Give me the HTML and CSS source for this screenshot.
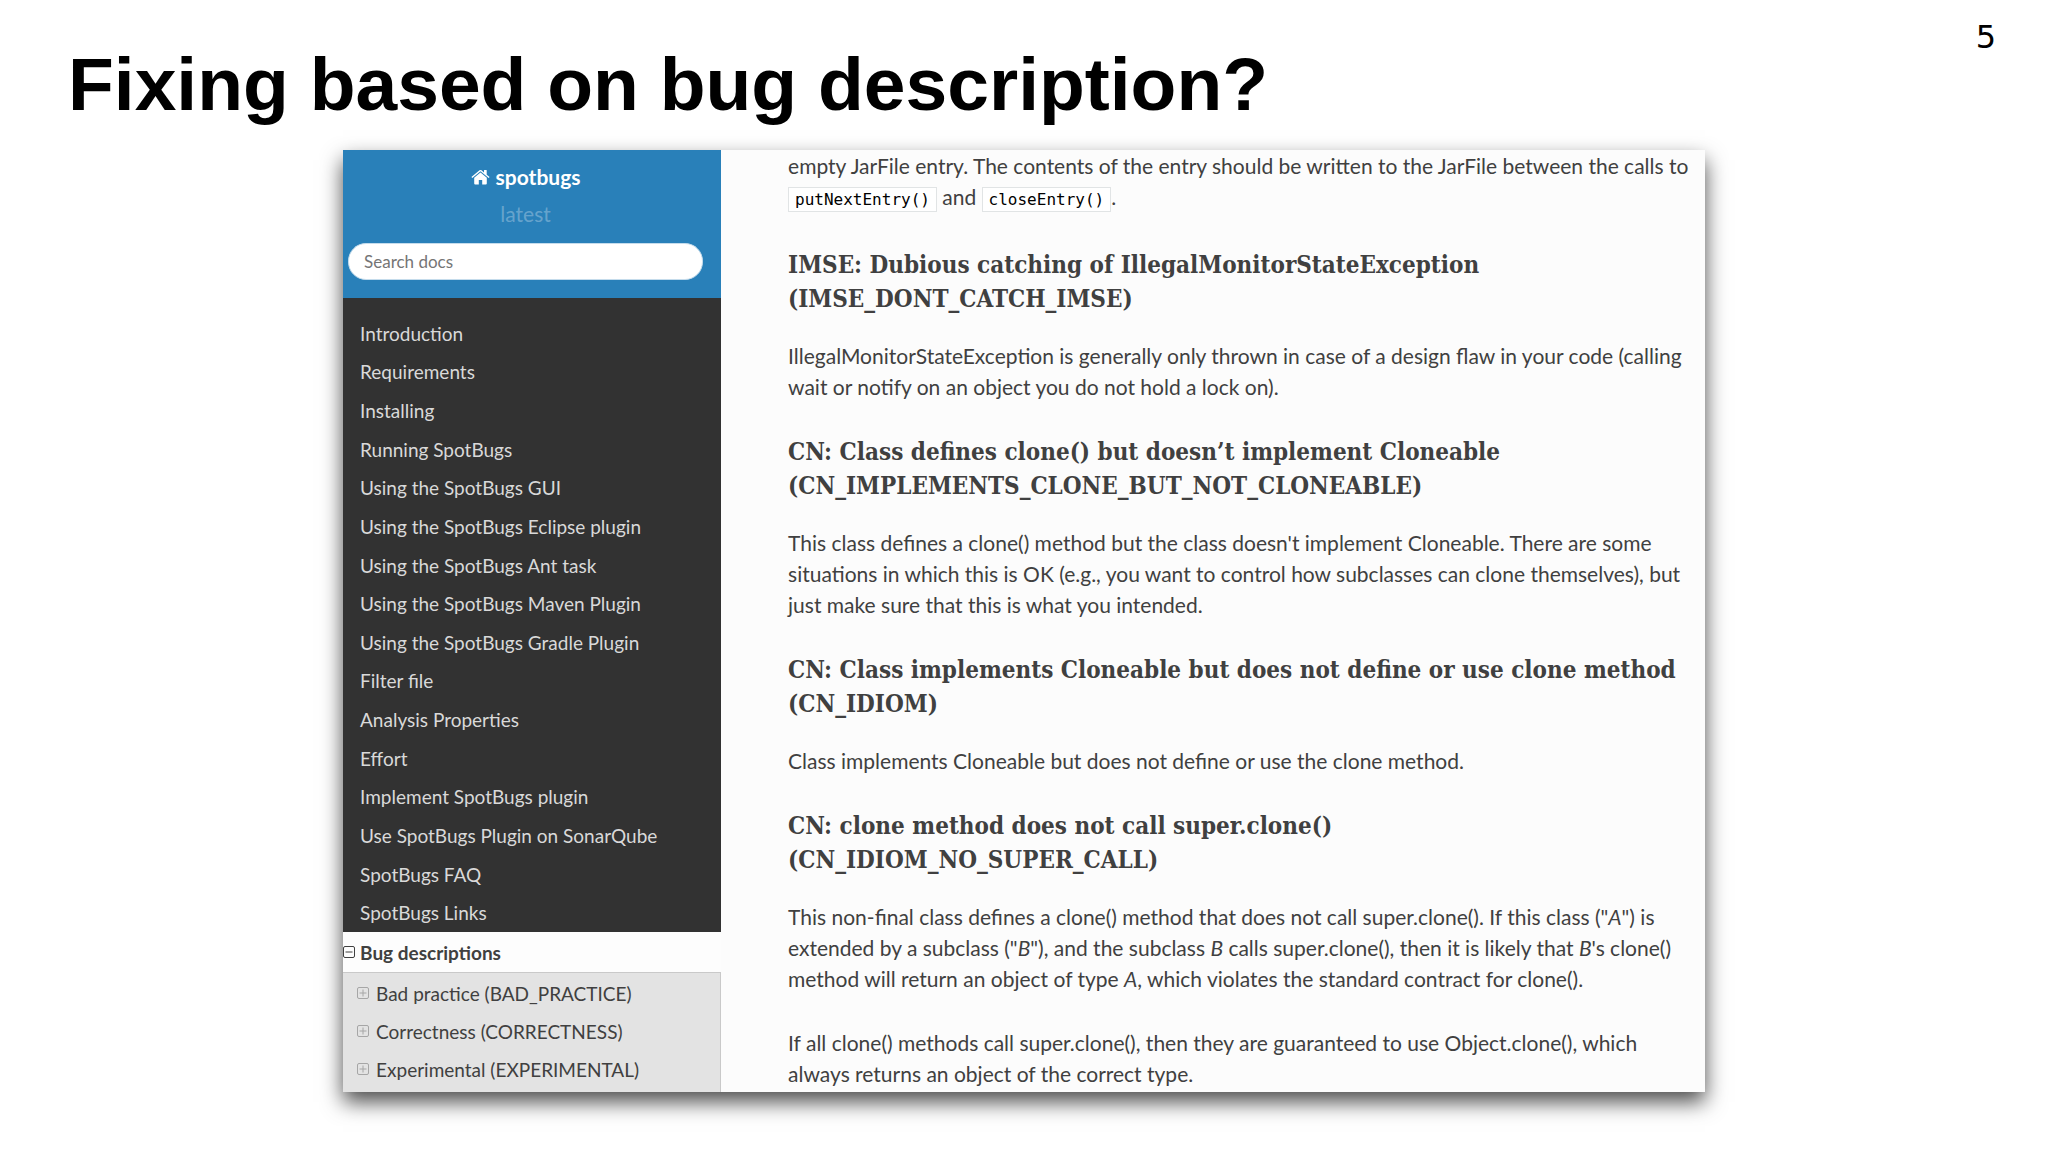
FILE: index.html
```html
<!DOCTYPE html>
<html lang="en">
<head>
    <meta charset="UTF-8">
    <meta name="viewport" content="width=device-width, initial-scale=1.0">
    <title>Fixing based on bug description?</title>
    <link rel="stylesheet" href="styles.css">
</head>
<body>
    <header class="slide-header">
        <h1>Fixing based on bug description?</h1>
        <span class="page-number">5</span>
    </header>

    <div class="docs">
        <aside class="sidebar">
            <div class="search-area">
                <a class="project" href="#">
                    <svg class="home-icon" viewBox="0 0 19 16" aria-hidden="true">
                        <path d="M9.500 3.600 L15.800 8.800 V14.600 Q15.800 15.600 14.800 15.600 H11.200 V10.900 H7.800 V15.600 H4.200 Q3.200 15.600 3.200 14.600 V8.800 Z"/>
                        <path d="M0.400 8.100 L8.500 1.300 Q9.500 0.500 10.500 1.300 L13 3.400 V1.300 Q13 0.900 13.400 0.900 H15.300 Q15.700 0.900 15.700 1.300 V5.700 L18.600 8.100 L17.700 9.100 L9.500 2.300 L1.300 9.100 Z"/>
                    </svg>
                    spotbugs
                </a>
                <div class="version">latest</div>
                <form role="search">
                    <input type="text" class="search" placeholder="Search docs" aria-label="Search docs">
                </form>
            </div>
            <nav class="menu">
                <ul class="menu-main">
                    <li><a href="#">Introduction</a></li>
                    <li><a href="#">Requirements</a></li>
                    <li><a href="#">Installing</a></li>
                    <li><a href="#">Running SpotBugs</a></li>
                    <li><a href="#">Using the SpotBugs GUI</a></li>
                    <li><a href="#">Using the SpotBugs Eclipse plugin</a></li>
                    <li><a href="#">Using the SpotBugs Ant task</a></li>
                    <li><a href="#">Using the SpotBugs Maven Plugin</a></li>
                    <li><a href="#">Using the SpotBugs Gradle Plugin</a></li>
                    <li><a href="#">Filter file</a></li>
                    <li><a href="#">Analysis Properties</a></li>
                    <li><a href="#">Effort</a></li>
                    <li><a href="#">Implement SpotBugs plugin</a></li>
                    <li><a href="#">Use SpotBugs Plugin on SonarQube</a></li>
                    <li><a href="#">SpotBugs FAQ</a></li>
                    <li><a href="#">SpotBugs Links</a></li>
                </ul>
                <a class="current" href="#">
                    <svg class="toggle" viewBox="0 0 12 12" aria-hidden="true">
                        <rect x="0.500" y="0.500" width="11" height="11" rx="1.500"/>
                        <path d="M2.500 6H9.500"/>
                    </svg>
                    Bug descriptions
                </a>
                <ul class="menu-sub">
                    <li><a href="#">
                        <svg class="toggle" viewBox="0 0 12 12" aria-hidden="true">
                            <rect x="0.500" y="0.500" width="11" height="11" rx="1.500"/>
                            <path d="M2.500 6H9.500M6 2.500V9.500"/>
                        </svg>
                        Bad practice (BAD_PRACTICE)
                    </a></li>
                    <li><a href="#">
                        <svg class="toggle" viewBox="0 0 12 12" aria-hidden="true">
                            <rect x="0.500" y="0.500" width="11" height="11" rx="1.500"/>
                            <path d="M2.500 6H9.500M6 2.500V9.500"/>
                        </svg>
                        Correctness (CORRECTNESS)
                    </a></li>
                    <li><a href="#">
                        <svg class="toggle" viewBox="0 0 12 12" aria-hidden="true">
                            <rect x="0.500" y="0.500" width="11" height="11" rx="1.500"/>
                            <path d="M2.500 6H9.500M6 2.500V9.500"/>
                        </svg>
                        Experimental (EXPERIMENTAL)
                    </a></li>
                </ul>
            </nav>
        </aside>

        <main class="content">
            <p>empty JarFile entry. The contents of the entry should be written to the JarFile between the calls to <code>putNextEntry()</code> and <code>closeEntry()</code>.</p>

            <h2>IMSE: Dubious catching of IllegalMonitorStateException (IMSE_DONT_CATCH_IMSE)</h2>
            <p>IllegalMonitorStateException is generally only thrown in case of a design flaw in your code (calling wait or notify on an object you do not hold a lock on).</p>

            <h2>CN: Class defines clone() but doesn’t implement Cloneable (CN_IMPLEMENTS_CLONE_BUT_NOT_CLONEABLE)</h2>
            <p>This class defines a clone() method but the class doesn't implement Cloneable. There are some situations in which this is OK (e.g., you want to control how subclasses can clone themselves), but just make sure that this is what you intended.</p>

            <h2>CN: Class implements Cloneable but does not define or use clone method (CN_IDIOM)</h2>
            <p>Class implements Cloneable but does not define or use the clone method.</p>

            <h2>CN: clone method does not call super.clone() (CN_IDIOM_NO_SUPER_CALL)</h2>
            <p>This non-final class defines a clone() method that does not call super.clone(). If this class ("<em>A</em>") is extended by a subclass ("<em>B</em>"), and the subclass <em>B</em> calls super.clone(), then it is likely that <em>B</em>'s clone() method will return an object of type <em>A</em>, which violates the standard contract for clone().</p>
            <p>If all clone() methods call super.clone(), then they are guaranteed to use Object.clone(), which always returns an object of the correct type.</p>
        </main>
    </div>
</body>
</html>
```
FILE: styles.css
```css
* {
    box-sizing: border-box;
}
body {
    margin: 0;
    padding-bottom: 60px;
    background: #fff;
    color: #404040;
    font-family: Lato, "Open Sans", sans-serif;
    font-size: 21px;
    line-height: 31px;
}
a {
    color: inherit;
    text-decoration: none;
}
ul {
    list-style: none;
    margin: 0;
    padding: 0;
}
.slide-header {
    display: flex;
    justify-content: space-between;
    align-items: flex-start;
    height: 150px;
    padding: 20px 52px 0 68px;
    color: #000;
}
h1 {
    margin: 20px 0 0;
    font-family: "Liberation Sans", Arial, sans-serif;
    font-size: 75px;
    line-height: 88px;
}
.page-number {
    font-family: "DejaVu Sans", sans-serif;
    font-size: 32px;
    line-height: 34px;
}
.docs {
    display: flex;
    width: 66.5%;
    margin: 0 auto;
    background: #fcfcfc;
    box-shadow: 0 10px 20px rgba(0, 0, 0, 0.7);
}

/* sidebar */
.sidebar {
    display: flex;
    flex-direction: column;
    flex: 0 0 378px;
    background: #323232;
}
.search-area {
    display: flex;
    flex-direction: column;
    align-items: center;
    height: 148px;
    padding: 11px 18px 0 5px;
    background: #2980b9;
    color: #fff;
}
.project {
    display: flex;
    align-items: center;
    gap: 6px;
    font-weight: bold;
}
.home-icon {
    width: 19px;
    height: 16px;
    fill: #fff;
}
.version {
    margin: 6px 0 14px;
    color: rgba(255, 255, 255, 0.3);
}
form {
    width: 100%;
}
.search {
    display: block;
    width: 100%;
    height: 37px;
    padding: 0 15px;
    border: 1px solid #c5dcec;
    border-radius: 18px;
    background: #fff;
    font-family: inherit;
    font-size: 17px;
}
.search::placeholder {
    color: #757575;
}
.menu {
    display: flex;
    flex-direction: column;
    flex: 1;
    font-size: 19px;
}
.menu-main {
    display: flex;
    flex-direction: column;
    flex: 1;
    padding-top: 16px;
    color: #d9d9d9;
}
.menu-main li {
    display: flex;
    align-items: center;
    flex: 1;
    padding-left: 17px;
}
.toggle {
    flex: none;
    width: 12px;
    height: 12px;
    fill: none;
    stroke: currentColor;
}
.current {
    display: flex;
    align-items: center;
    gap: 5px;
    height: 40px;
    background: #fdfdfd;
    font-weight: bold;
}
.menu-sub {
    padding: 1px 0 4px;
    border-top: 1px solid #c9c9c9;
    border-right: 1px solid #c9c9c9;
    background: #e3e3e3;
}
.menu-sub a {
    display: flex;
    align-items: center;
    gap: 7px;
    height: 38px;
    padding-left: 14px;
}
.menu-sub .toggle {
    stroke: #a6a6a6;
}

/* article */
.content {
    flex: 1;
    padding: 0 10px 3px 67px;
}
.content p {
    margin: 0 0 33px;
}
.content p:last-child {
    margin-bottom: 0;
}
h2 {
    margin: 0 0 24px;
    font-family: "Roboto Slab", "DejaVu Serif Condensed", "DejaVu Serif", serif;
    font-size: 24px;
    line-height: 34px;
}
code {
    padding: 2px 6px;
    border: 1px solid #e1e4e5;
    background: #fff;
    color: #000;
    font-family: "DejaVu Sans Mono", monospace;
    font-size: 16px;
}
```
